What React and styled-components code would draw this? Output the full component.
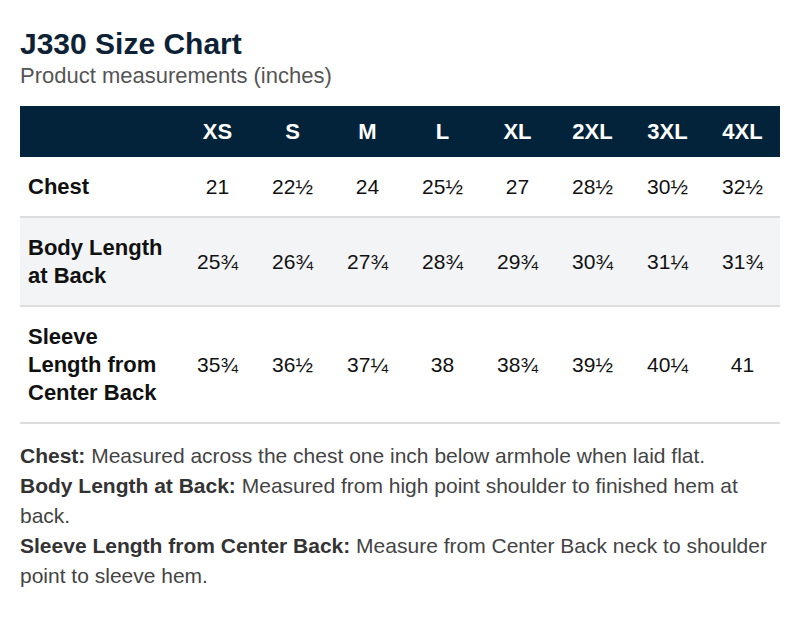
import React from 'react'
import styled, { createGlobalStyle } from 'styled-components'

const GlobalStyle = createGlobalStyle`
  body {
    margin: 0;
    background: #ffffff;
    font-family: "Liberation Sans", Arial, sans-serif;
  }
`

const Page = styled.div`
  padding: 26px 20px 20px;
  width: 760px;
`

const Title = styled.h1`
  margin: 0;
  font-size: 30px;
  line-height: 36px;
  font-weight: 700;
  color: #0d2236;
`

const Subtitle = styled.p`
  margin: 0 0 16px;
  font-size: 22px;
  line-height: 28px;
  color: #555555;
`

const Table = styled.table`
  width: 760px;
  border-collapse: collapse;
  table-layout: fixed;
`

const HeadRow = styled.tr`
  background: #022339;
`

const HeadCell = styled.th`
  height: 51px;
  padding: 0;
  font-size: 22px;
  font-weight: 700;
  color: #ffffff;
  text-align: center;
  width: ${p => (p.$label ? '160px' : '75px')};
`

const Row = styled.tr`
  background: ${p => (p.$shaded ? '#f3f4f6' : '#ffffff')};
  border-bottom: 2px solid #dddddd;
`

const LabelCell = styled.td`
  padding: 16px 8px 15px;
  font-size: 22px;
  line-height: 28px;
  font-weight: 700;
  color: #111111;
  vertical-align: middle;
`

const ValueCell = styled.td`
  padding: 16px 0 15px;
  font-size: 21px;
  line-height: 28px;
  color: #111111;
  text-align: center;
  vertical-align: middle;
`

const Notes = styled.div`
  margin-top: 17px;
  font-size: 21px;
  line-height: 30px;
  color: #444444;
`

const Note = styled.p`
  margin: 0;
  b {
    color: #333333;
  }
`

const sizes = ['XS', 'S', 'M', 'L', 'XL', '2XL', '3XL', '4XL']

const rows = [
  { label: 'Chest', values: ['21', '22½', '24', '25½', '27', '28½', '30½', '32½'] },
  { label: 'Body Length at Back', values: ['25¾', '26¾', '27¾', '28¾', '29¾', '30¾', '31¼', '31¾'] },
  { label: 'Sleeve Length from Center Back', values: ['35¾', '36½', '37¼', '38', '38¾', '39½', '40¼', '41'] },
]

const notes = [
  ['Chest:', 'Measured across the chest one inch below armhole when laid flat.'],
  ['Body Length at Back:', 'Measured from high point shoulder to finished hem at back.'],
  ['Sleeve Length from Center Back:', 'Measure from Center Back neck to shoulder point to sleeve hem.'],
]

export default function App() {
  return (
    <>
      <GlobalStyle />
      <Page>
        <Title>J330 Size Chart</Title>
        <Subtitle>Product measurements (inches)</Subtitle>
        <Table>
          <thead>
            <HeadRow>
              <HeadCell $label />
              {sizes.map(s => (
                <HeadCell key={s}>{s}</HeadCell>
              ))}
            </HeadRow>
          </thead>
          <tbody>
            {rows.map((r, i) => (
              <Row key={r.label} $shaded={i === 1}>
                <LabelCell>{r.label}</LabelCell>
                {r.values.map((v, j) => (
                  <ValueCell key={j}>{v}</ValueCell>
                ))}
              </Row>
            ))}
          </tbody>
        </Table>
        <Notes>
          {notes.map(([k, t]) => (
            <Note key={k}>
              <b>{k}</b> {t}
            </Note>
          ))}
        </Notes>
      </Page>
    </>
  )
}
